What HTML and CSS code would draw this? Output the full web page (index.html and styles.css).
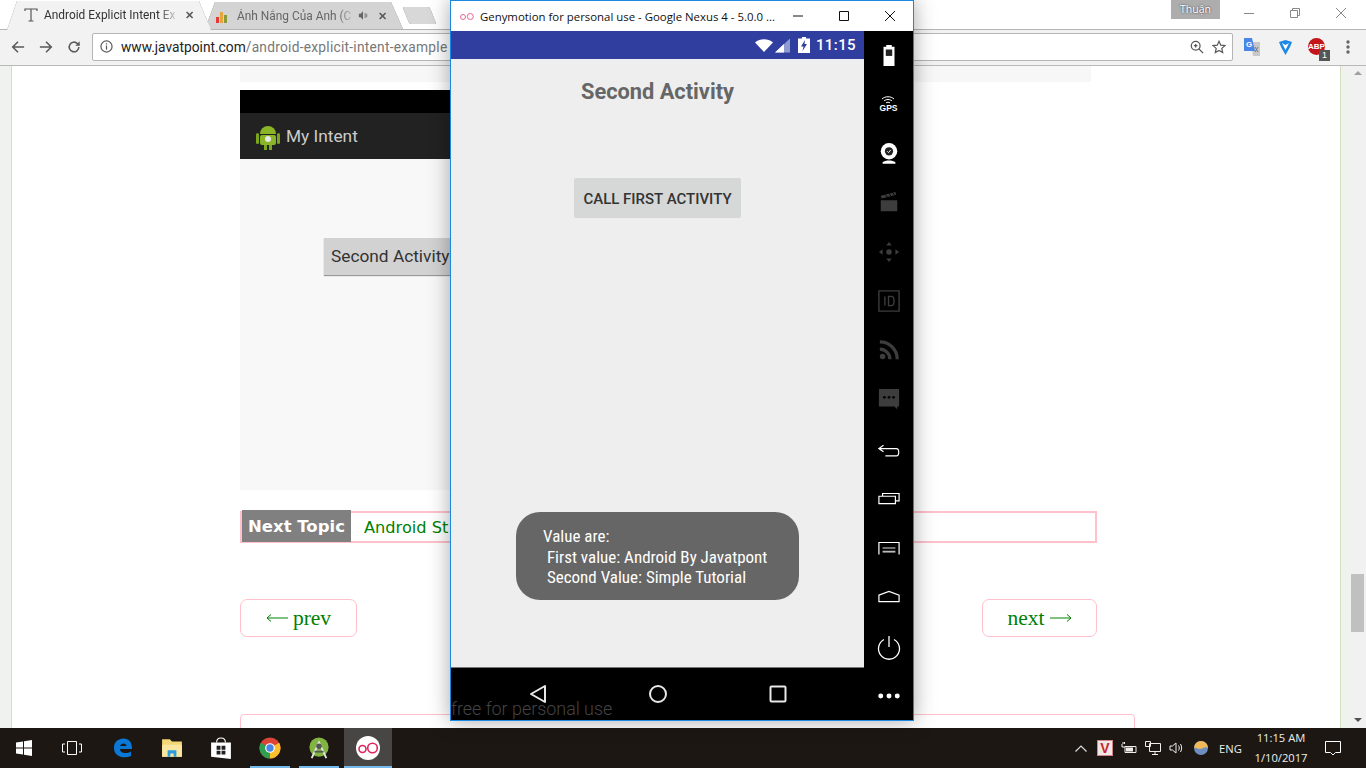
FILE: index.html
```html
<!DOCTYPE html>
<html lang="en">

<head>
    <meta charset="UTF-8">
    <meta name="viewport" content="width=device-width, initial-scale=1.0">
    <title>Android Explicit Intent Example</title>
    <link rel="stylesheet" href="styles.css">
</head>

<body>
    <!-- Chrome window -->
    <div class="browser">
        <div class="tabstrip">
            <div class="tabs">
                <div class="tab tab-active">
                    <svg class="tab-icon" viewBox="0 0 16 16" fill="none" stroke="#555" stroke-width="1.2">
                        <path d="M2 4V2h12v2M8 2v12M5.5 14h5"></path>
                    </svg>
                    <span class="tab-title">Android Explicit Intent Ex</span>
                    <span class="tab-close">✕</span>
                </div>
                <div class="tab tab-back">
                    <svg class="tab-icon" viewBox="0 0 16 16">
                        <rect x="1" y="9" width="3" height="6" fill="#e53935"></rect>
                        <rect x="5" y="4" width="3" height="11" fill="#e8a33d"></rect>
                        <rect x="9" y="7" width="3" height="8" fill="#8a9a3a"></rect>
                    </svg>
                    <span class="tab-title">Ánh Nắng Của Anh (C</span>
                    <svg class="tab-sound" viewBox="0 0 12 12" fill="#666">
                        <path d="M1 4h2l3-3v10L3 8H1zM8 3h1v6H8zM10 4h1v4h-1z"></path>
                    </svg>
                    <span class="tab-close">✕</span>
                </div>
                <div class="tab-new"></div>
            </div>
            <div class="tab-spacer"></div>
            <div class="profile">Thuận</div>
            <div class="win-buttons">
                <svg viewBox="0 0 46 30" stroke="#888" fill="none"><path d="M18 13.5h10"></path></svg>
                <svg viewBox="0 0 46 30" stroke="#888" fill="none"><path d="M18.5 10.5h7v7h-7zM20.5 10.5v-2h7v7h-2"></path></svg>
                <svg viewBox="0 0 46 30" stroke="#888" fill="none"><path d="M18 8l10 10M28 8L18 18"></path></svg>
            </div>
        </div>

        <div class="toolbar">
            <svg class="nav-icon" viewBox="0 0 16 16" fill="none" stroke="#5a5a5a" stroke-width="1.8"><path d="M15 8H2M8 2L2 8l6 6"></path></svg>
            <svg class="nav-icon" viewBox="0 0 16 16" fill="none" stroke="#5a5a5a" stroke-width="1.8"><path d="M1 8h13M8 2l6 6-6 6"></path></svg>
            <svg class="nav-icon" viewBox="0 0 16 16" fill="none" stroke="#5a5a5a" stroke-width="1.8"><path d="M13.5 8a5.5 5.5 0 1 1-1.6-3.9L14 6"></path><path d="M14.5 1.5v5h-5z" fill="#5a5a5a" stroke="none"></path></svg>
            <div class="omnibox">
                <svg class="omni-info" viewBox="0 0 14 14" fill="none" stroke="#5a5a5a" stroke-width="1.3">
                    <circle cx="7" cy="7" r="6"></circle><path d="M7 6v4.5M7 3.5v1.3"></path>
                </svg>
                <span class="url">www.javatpoint.com<span class="url-path">/android-explicit-intent-example</span></span>
                <div class="omni-spacer"></div>
                <svg class="omni-tool" viewBox="0 0 16 16" fill="none" stroke="#5a5a5a" stroke-width="1.5">
                    <circle cx="6.5" cy="6.5" r="5"></circle><path d="M10 10l5 5M4.500 6.500h4M6.500 4.500v4"></path>
                </svg>
                <svg class="omni-tool" viewBox="0 0 16 16" fill="none" stroke="#5a5a5a" stroke-width="1.4">
                    <path d="M8 1.500l2 4.400 4.800.5-3.600 3.200 1 4.700L8 11.900l-4.200 2.400 1-4.700L1.200 6.400 6 5.900z"></path>
                </svg>
            </div>
            <div class="extensions">
                <svg class="ext-translate" viewBox="0 0 16 18">
                    <path d="M7 4h9v14H9z" fill="#c8c8c8"></path>
                    <path d="M11 9l3 5M14 9l-3 5" stroke="#777" fill="none"></path>
                    <path d="M0 0h8l3 13H0z" fill="#4a86e8"></path>
                    <text x="2" y="9" class="ext-letter">G</text>
                </svg>
                <svg class="ext-filter" viewBox="0 0 15 16">
                    <path d="M1 3l6.500-2L14 3l-2 5-4.500 8L3 8z" fill="#1e88e5"></path>
                    <path d="M4 4l3.500 7L11 4 7.500 6z" fill="#fff"></path>
                </svg>
                <div class="abp">
                    <span class="abp-badge">ABP</span>
                    <span class="abp-count">1</span>
                </div>
                <svg class="menu-dots" viewBox="0 0 4 14" fill="#666">
                    <circle cx="2" cy="2" r="1.700"></circle><circle cx="2" cy="7" r="1.700"></circle><circle cx="2" cy="12" r="1.700"></circle>
                </svg>
            </div>
        </div>

        <div class="viewport">
            <div class="page">
                <div class="page-column">
                    <div class="code-end"></div>
                    <div class="shot">
                        <div class="shot-status"></div>
                        <div class="shot-bar">
                            <svg class="shot-logo" viewBox="0 0 24 28">
                                <path d="M4 12a8 8 0 0 1 16 0z" fill="#8ab526"></path>
                                <rect x="4" y="13" width="16" height="10" rx="2" fill="#8ab526"></rect>
                                <rect x="0" y="11" width="3" height="11" rx="1.500" fill="#7aa51f"></rect>
                                <rect x="21" y="11" width="3" height="11" rx="1.500" fill="#7aa51f"></rect>
                                <rect x="8" y="23" width="3" height="5" fill="#7aa51f"></rect>
                                <rect x="13" y="23" width="3" height="5" fill="#7aa51f"></rect>
                                <circle cx="12" cy="17" r="3" fill="#e8e8e8"></circle>
                            </svg>
                            <span>My Intent</span>
                        </div>
                        <div class="shot-body">
                            <div class="shot-button">Second Activity</div>
                        </div>
                    </div>
                    <div class="next-topic">
                        <span class="next-label">Next Topic</span>
                        <span class="next-link">Android St</span>
                    </div>
                    <div class="pager">
                        <a class="pager-link pager-prev">
                            <svg class="pager-arrow" viewBox="0 0 22 10" fill="none" stroke="#008000"><path d="M22 5H1M5 1.500L1 5l4 3.500"></path></svg>
                            <span>prev</span>
                        </a>
                        <a class="pager-link">
                            <span>next</span>
                            <svg class="pager-arrow" viewBox="0 0 22 10" fill="none" stroke="#008000"><path d="M0 5h21M17 1.500L21 5l-4 3.500"></path></svg>
                        </a>
                    </div>
                    <div class="bottom-box"></div>
                </div>
            </div>
            <div class="scrollbar">
                <div class="scroll-up"></div>
                <div class="scroll-thumb"></div>
                <div class="scroll-down"></div>
            </div>
        </div>
    </div>

    <!-- Taskbar -->
    <div class="taskbar">
        <div class="task-item task-start">
            <svg viewBox="0 0 16 16" class="task-svg" fill="#fff"><path d="M0 2.500l7-1v6.100H0zM8 1.300l8-1.300v7.600H8zM0 8.400h7v6.100l-7-1zM8 8.400h8V16l-8-1.300z"></path></svg>
        </div>
        <div class="task-item task-view">
            <svg viewBox="0 0 20 14" class="task-svg-wide" fill="none" stroke="#fff" stroke-width="1"><path d="M5.500.5h9v13h-9zM3 3H.5v8H3M17 3h2.500v8H17"></path></svg>
        </div>
        <div class="task-item">
            <svg viewBox="0 0 20 20" class="task-edge" fill="none"><path d="M1 10C1 4 5 .5 10.500 .5c5.500 0 8.500 3.500 8.500 10.500H7c0 4 6 5.500 11 2.500v4.500c-7 3-17 1-17-8zM7 8h6.500c0-3.500-5.500-3.500-6.500 0z" fill="#0a78d7" fill-rule="evenodd"></path></svg>
        </div>
        <div class="task-item">
            <svg viewBox="0 0 20 20" class="task-app"><path d="M1 2h7l2 2h9v14H1z" fill="#f4d774"></path><path d="M1 7h18v11H1z" fill="#fbe6a0"></path><path d="M6 18v-6h8v6h-2.500v-3h-3v3z" fill="#2a9de0"></path></svg>
        </div>
        <div class="task-item">
            <svg viewBox="0 0 20 20" class="task-app"><path d="M1 5h18v15L1 18z" fill="#fff"></path><path d="M6 5c0-5.500 8-5.500 8 0" fill="none" stroke="#fff"></path><path d="M6 8h3.500v3.500H6zM10.500 8H14v3.500h-3.500zM6 12.500h3.500V16H6zM10.500 12.500H14V16h-3.500z" fill="#222"></path></svg>
        </div>
        <div class="task-item task-open">
            <svg viewBox="0 0 24 24" class="task-app">
                <circle cx="12" cy="12" r="11.500" fill="#db4437"></circle>
                <path d="M12 12L22 6.300A11.500 11.500 0 0 1 12 23.500z" fill="#fbc02d"></path>
                <path d="M12 12L12 23.500A11.500 11.500 0 0 1 2 6.300z" fill="#2e9e4f"></path>
                <circle cx="12" cy="12" r="5.300" fill="#fff"></circle>
                <circle cx="12" cy="12" r="4" fill="#4a86e8"></circle>
            </svg>
        </div>
        <div class="task-item task-open">
            <svg viewBox="0 0 24 24" class="task-app">
                <circle cx="12" cy="11" r="10.500" fill="#82b440"></circle>
                <path d="M4 23L12 6l8 17" fill="none" stroke="#e8e8e8" stroke-width="2"></path>
                <circle cx="12" cy="10" r="3" fill="#555"></circle>
                <path d="M7 16h10" stroke="#555" stroke-width="2"></path>
            </svg>
        </div>
        <div class="task-item task-open task-active">
            <svg viewBox="0 0 24 24" class="task-app-lg">
                <circle cx="12" cy="12" r="12" fill="#fff"></circle>
                <circle cx="6.500" cy="13" r="3.500" fill="none" stroke="#e0245e" stroke-width="1.600"></circle>
                <circle cx="16.500" cy="12" r="4.800" fill="none" stroke="#e0245e" stroke-width="1.600"></circle>
            </svg>
        </div>
        <div class="task-spacer"></div>
        <div class="tray">
            <svg class="tray-chevron" viewBox="0 0 12 7" fill="none" stroke="#ddd" stroke-width="1.200"><path d="M.5 6.500L6 1l5.500 5.500"></path></svg>
            <div class="tray-v">V</div>
            <svg class="tray-icon" viewBox="0 0 16 14" fill="none" stroke="#eee"><path d="M4 5.500h11v6H4zM1 3v3h3M2 1v2M3.500 1v2"></path><path d="M5 6.500h7v4H5z" fill="#eee" stroke="none"></path></svg>
            <svg class="tray-icon" viewBox="0 0 16 14" fill="none" stroke="#eee"><path d="M4.500 2.500h11v8h-11zM.5.500h5v5h-5zM10 10.500v3M7 13.500h6"></path></svg>
            <svg class="tray-icon" viewBox="0 0 16 14" fill="none" stroke="#eee"><path d="M1 5h2.500L7 2v10L3.500 9H1zM9.500 4.500c1 1.500 1 3.500 0 5M11.500 3c1.500 2.500 1.500 5.500 0 8"></path></svg>
            <svg class="tray-weather" viewBox="0 0 14 14">
                <circle cx="7" cy="7" r="7" fill="#6e8ebf"></circle>
                <path d="M0 7a7 7 0 0 1 14 0C11 5 9 8 6 8 4 8 2 6 0 7z" fill="#f0b95a"></path>
            </svg>
            <span class="tray-lang">ENG</span>
            <div class="tray-clock">
                <span>11:15 AM</span>
                <span>1/10/2017</span>
            </div>
            <svg class="tray-notify" viewBox="0 0 16 15" fill="none" stroke="#fff"><path d="M.5.500h15v11h-5l-2.500 2.500-2.500-2.500h-5z"></path></svg>
        </div>
    </div>

    <!-- Genymotion window, floating over the browser -->
    <div class="geny">
        <div class="geny-title">
            <svg class="geny-logo" viewBox="0 0 14 9" fill="none" stroke="#e8668c" stroke-width="1">
                <circle cx="3" cy="5" r="2.500"></circle><circle cx="10.300" cy="4.500" r="3"></circle>
            </svg>
            <span class="geny-name">Genymotion for personal use - Google Nexus 4 - 5.0.0 ...</span>
            <div class="geny-controls">
                <svg viewBox="0 0 46 30" stroke="#111" fill="none"><path d="M18 15h10"></path></svg>
                <svg viewBox="0 0 46 30" stroke="#111" fill="none"><path d="M18.500 10.500h9v9h-9z"></path></svg>
                <svg viewBox="0 0 46 30" stroke="#111" fill="none"><path d="M18 10l10 10M28 10L18 20"></path></svg>
            </div>
        </div>
        <div class="geny-main">
            <div class="phone">
                <div class="phone-status">
                    <svg class="status-wifi" viewBox="0 0 18 13" fill="#fff"><path d="M0 3.500C5-.9 13-.9 18 3.500L9 13z"></path></svg>
                    <svg class="status-signal" viewBox="0 0 16 15"><path d="M0 15L16 0v15z" fill="#8f9bd0"></path><path d="M0 15L9.500 6v9z" fill="#fff"></path></svg>
                    <svg class="status-battery" viewBox="0 0 12 16"><path d="M4 0h4v1.500h4V16H0V1.500h4z" fill="#fff"></path><path d="M7 3L3 9.500h2.500L4.500 14 9 7H6.500z" fill="#303f9f"></path></svg>
                    <span class="status-time">11:15</span>
                </div>
                <div class="phone-screen">
                    <h1 class="activity-title">Second Activity</h1>
                    <div class="activity-button">CALL FIRST ACTIVITY</div>
                    <div class="toast">
                        <span>Value are:</span>
                        <span>&nbsp;First value: Android By Javatpont</span>
                        <span>&nbsp;Second Value: Simple Tutorial</span>
                    </div>
                </div>
                <div class="phone-nav">
                    <svg viewBox="0 0 20 20" fill="none" stroke="#e8e8e8" stroke-width="2"><path d="M17 2v16L3 10z" stroke-linejoin="round"></path></svg>
                    <svg viewBox="0 0 20 20" fill="none" stroke="#e8e8e8" stroke-width="2"><circle cx="10" cy="10" r="8"></circle></svg>
                    <svg viewBox="0 0 20 20" fill="none" stroke="#e8e8e8" stroke-width="2"><rect x="2.500" y="2.500" width="15" height="15" rx="1"></rect></svg>
                </div>
                <div class="free-note">free for personal use</div>
            </div>
            <div class="geny-side">
                <svg class="side-icon" viewBox="0 0 24 24"><path d="M9 1h6v2h3v21H6V3h3z" fill="#fff"></path><rect x="8.500" y="6" width="7" height="7" fill="#222"></rect></svg>
                <div class="side-gps">
                    <svg viewBox="0 0 14 8" fill="none" stroke="#fff" stroke-width="1"><path d="M1 3c3-3 9-3 12 0M3 5c2-2 6-2 8 0M5 7c1-1 3-1 4 0"></path></svg>
                    <span>GPS</span>
                </div>
                <svg class="side-icon" viewBox="0 0 24 24"><circle cx="12" cy="9" r="9" fill="#fff"></circle><circle cx="12" cy="9" r="4.500" fill="#222"></circle><path d="M10 9l1.500 1.500L14 7.500" stroke="#fff" fill="none"></path><path d="M5 21c3-2.500 11-2.500 14 0v1.500H5z" fill="#fff"></path></svg>
                <svg class="side-icon" viewBox="0 0 24 24" fill="#3d3d3d"><path d="M3 9h18v12H3zM3 4L19 0l1 3-16 4z"></path><path d="M8 2.500l2 3M12 1.500l2 3M16 .5l2 3" stroke="#000"></path></svg>
                <svg class="side-icon" viewBox="0 0 24 24" fill="#3d3d3d"><circle cx="12" cy="12" r="3"></circle><path d="M12 1l3 4H9zM12 23l-3-4h6zM1 12l4-3v6zM23 12l-4 3V9z"></path></svg>
                <svg class="side-icon" viewBox="0 0 24 24" fill="none" stroke="#3d3d3d" stroke-width="1.500"><path d="M1 1h22v22H1z"></path><path d="M7.500 7v10M11.500 7v10h3c4 0 4-10 0-10z"></path></svg>
                <svg class="side-icon" viewBox="0 0 24 24" fill="none" stroke="#3d3d3d" stroke-width="3.500"><path d="M2 2c10 0 19 8 19 19M2 10c6 0 11 5 11 11"></path><circle cx="5" cy="18" r="3" fill="#3d3d3d" stroke="none"></circle></svg>
                <svg class="side-icon" viewBox="0 0 24 24"><path d="M1 0h22v19h-2v3l-3-3H1z" fill="#3d3d3d"></path><circle cx="7" cy="9" r="1.500"></circle><circle cx="12" cy="9" r="1.500"></circle><circle cx="17" cy="9" r="1.500"></circle></svg>
                <svg class="side-icon" viewBox="0 0 24 24" fill="none" stroke="#fff" stroke-width="1.300"><path d="M6 8l-5 3.500L6 15M1 11.500h19c3.500 0 3.500 8 0 8H8"></path></svg>
                <svg class="side-icon" viewBox="0 0 24 24" fill="none" stroke="#fff" stroke-width="1.300"><path d="M1 9h18v8H1zM5 9V6h18v8h-4"></path></svg>
                <svg class="side-icon" viewBox="0 0 24 24" fill="none" stroke="#fff" stroke-width="1.300"><path d="M1 19V6h22v13"></path><path d="M5 12h14" stroke="#bbb"></path><path d="M5 16h14" stroke="#bbb" stroke-width="2"></path></svg>
                <svg class="side-icon" viewBox="0 0 24 24" fill="none" stroke="#fff" stroke-width="1.300"><path d="M1 10l11-4 11 4v7H1z"></path></svg>
                <svg class="side-power" viewBox="0 0 24 24" fill="none" stroke="#fff" stroke-width="1.300"><path d="M7 3.500a10.500 10.500 0 1 0 10 0M12 0v11"></path></svg>
                <svg class="side-more" viewBox="0 0 24 6" fill="#fff"><circle cx="3" cy="3" r="2.700"></circle><circle cx="12" cy="3" r="2.700"></circle><circle cx="21" cy="3" r="2.700"></circle></svg>
            </div>
        </div>
    </div>
</body>

</html>
```

FILE: styles.css
```css
* {
    box-sizing: border-box;
}

html,
body {
    height: 100%;
}

body {
    margin: 0;
    padding: 0;
    overflow: hidden;
    position: relative;
    font-family: "Open Sans", "Noto Sans", sans-serif;
    display: flex;
    flex-direction: column;
}

svg {
    display: block;
    flex: none;
}
/* Browser window */

.browser {
    height: 728px;
    display: flex;
    flex-direction: column;
    background: #fff;
}
/* Tabs */

.tabstrip {
    height: 29px;
    display: flex;
    align-items: flex-end;
    padding-left: 7px;
    background: #fff;
    flex: none;
    position: relative;
    z-index: 1;
}

.tabs {
    display: flex;
    align-items: flex-end;
    filter: drop-shadow(0 0 0.6px #777);
}

.tab {
    display: flex;
    align-items: center;
    font-size: 12px;
    white-space: nowrap;
    position: relative;
    clip-path: polygon(0 100%, 10px 0, calc(100% - 12px) 0, 100% 100%);
}

.tab-active {
    width: 204px;
    height: 29px;
    margin-bottom: -1px;
    padding: 0 17px 2px 16px;
    background: #f2f2f2;
    color: #333;
    z-index: 1;
}

.tab-back {
    width: 198px;
    height: 27px;
    margin-left: -6px;
    padding: 0 16px 0 10px;
    background: #d4d4d4;
    color: #666;
}

.tab-icon {
    width: 16px;
    height: 16px;
    margin-right: 5px;
}

.tab-back .tab-icon {
    margin-right: 6px;
}

.tab-title {
    flex: 1;
    min-width: 0;
    overflow: hidden;
    font-family: "Roboto", sans-serif;
    font-size: 11.9px;
    -webkit-mask-image: linear-gradient(to right, #000 85%, transparent);
    mask-image: linear-gradient(to right, #000 85%, transparent);
}

.tab-sound {
    width: 10px;
    height: 11px;
    margin: 0 4px 0 2px;
}

.tab-close {
    font-size: 11px;
    font-weight: bold;
    color: #5c5c5c;
    margin-left: 6px;
}

.tab-new {
    width: 27px;
    height: 17px;
    margin: 0 0 5px 3px;
    background: #d8d8d8;
    transform: skewX(22deg);
    border-radius: 2px;
    flex: none;
}

.tab-spacer {
    flex: 1;
}

.profile {
    align-self: flex-start;
    width: 49px;
    height: 19px;
    background: #adadad;
    color: #fff;
    font-size: 10.5px;
    line-height: 18px;
    text-align: center;
    text-shadow: 0 0 2px #222;
}

.win-buttons {
    align-self: flex-start;
    display: flex;
    width: 146px;
    padding-left: 6px;
}

.win-buttons svg {
    width: 46px;
    height: 30px;
}
/* Toolbar */

.toolbar {
    height: 37px;
    flex: none;
    display: flex;
    align-items: center;
    padding: 0 0 2px 11px;
    background: #f2f2f2;
    border-top: 1px solid #b4b4b4;
    border-bottom: 1px solid #b9b9b9;
}

.nav-icon {
    width: 14px;
    height: 14px;
    margin-right: 14px;
}

.omnibox {
    width: 1141px;
    height: 28px;
    margin-left: -3px;
    flex: none;
    display: flex;
    align-items: center;
    padding: 0 6px 0 7px;
    background: #fff;
    border: 1px solid #b5b5b5;
    border-radius: 2px;
}

.omni-info {
    width: 13px;
    height: 13px;
    margin-right: 8px;
}

.url {
    font-family: "Roboto", sans-serif;
    font-size: 13.75px;
    color: #222;
    white-space: nowrap;
}

.url-path {
    color: #777;
    letter-spacing: 0.25px;
}

.omni-spacer {
    flex: 1;
}

.omni-tool {
    width: 14px;
    height: 14px;
    margin-left: 8px;
}

.extensions {
    display: flex;
    align-items: center;
    padding-left: 11px;
}

.ext-translate {
    width: 16px;
    height: 18px;
}

.ext-filter {
    width: 15px;
    height: 16px;
    margin-left: 18px;
}

.ext-letter {
    font-family: "Liberation Sans", sans-serif;
    font-size: 8px;
    font-weight: bold;
    fill: #fff;
}

.abp {
    position: relative;
    width: 17px;
    height: 17px;
    margin-left: 15px;
    border-radius: 50%;
    background: #c4151b;
}

.abp-badge {
    display: block;
    font-family: "Liberation Sans", sans-serif;
    font-size: 8px;
    font-weight: bold;
    line-height: 17px;
    text-align: center;
    color: #fff;
}

.abp-count {
    position: absolute;
    right: -5px;
    bottom: -6px;
    width: 11px;
    height: 11px;
    background: #555;
    color: #fff;
    font-family: "Liberation Sans", sans-serif;
    font-size: 9px;
    line-height: 11px;
    text-align: center;
}

.menu-dots {
    width: 4px;
    height: 14px;
    margin-left: 21px;
}
/* Page */

.viewport {
    flex: 1;
    display: flex;
    min-height: 0;
    background: #f0f2f0;
}

.page {
    flex: 1;
    margin: 0 8px 0 11px;
    padding-left: 228px;
    background: #fff;
    border-left: 1px solid #d5dfc0;
    border-right: 1px solid #d5dfc0;
    overflow: hidden;
}

.page-column {
    width: 895px;
    height: 100%;
    display: flex;
    flex-direction: column;
    align-items: flex-start;
}

.code-end {
    width: 851px;
    height: 16px;
    background: #f7f7f7;
    flex: none;
}

.shot {
    width: 400px;
    height: 400px;
    margin-top: 8px;
    flex: none;
    display: flex;
    flex-direction: column;
}

.shot-status {
    height: 23px;
    background: #000;
}

.shot-bar {
    height: 46px;
    display: flex;
    align-items: center;
    padding-left: 16px;
    background: #222;
    color: #ccc;
    font-family: "Roboto", sans-serif;
    font-size: 17.3px;
}

.shot-logo {
    width: 24px;
    height: 28px;
    margin-right: 6px;
}

.shot-body {
    flex: 1;
    padding: 79px 0 0 84px;
    background: #f8f8f8;
}

.shot-button {
    width: 160px;
    height: 37px;
    padding-left: 7px;
    background: #d2d2d2;
    color: #333;
    font-family: "Roboto", sans-serif;
    font-size: 17.3px;
    line-height: 37px;
    white-space: nowrap;
    box-shadow: 0 1px 1px #999;
}

.next-topic {
    width: 857px;
    height: 32px;
    margin-top: 21px;
    flex: none;
    display: flex;
    align-items: center;
    border: 2px solid #ffc0cb;
}

.next-label {
    width: 109px;
    height: 32px;
    margin-top: -3px;
    align-self: flex-start;
    background: #808080;
    color: #fff;
    font-family: "DejaVu Sans", sans-serif;
    font-size: 16.5px;
    font-weight: bold;
    line-height: 34px;
    text-align: center;
    white-space: nowrap;
}

.next-link {
    margin-left: 13px;
    color: #008000;
    font-family: "DejaVu Sans", sans-serif;
    font-size: 16.2px;
}

.pager {
    width: 857px;
    margin-top: 56px;
    flex: none;
    display: flex;
    justify-content: space-between;
}

.pager-link {
    width: 115px;
    height: 38px;
    display: flex;
    align-items: center;
    justify-content: center;
    gap: 5px;
    border: 1px solid #ffc0cb;
    border-radius: 7px;
    color: #008000;
    font-family: "Liberation Serif", serif;
    font-size: 21.5px;
}

.pager-prev {
    width: 117px;
}

.pager-arrow {
    width: 22px;
    height: 10px;
}

.bottom-box {
    width: 895px;
    height: 40px;
    margin-top: 77px;
    flex: none;
    border: 1px solid #ffc0cb;
    border-radius: 4px;
}
/* Scrollbar */

.scrollbar {
    width: 17px;
    flex: none;
    padding-top: 5px;
    display: flex;
    flex-direction: column;
    align-items: center;
    background: #f1f1f1;
}

.scroll-up {
    height: 4px;
    border-left: 4px solid transparent;
    border-right: 4px solid transparent;
    border-bottom: 4px solid #a0a0a0;
}

.scroll-thumb {
    width: 13px;
    height: 58px;
    margin-top: 499px;
    background: #c0c0c0;
}

.scroll-down {
    height: 4px;
    margin-top: auto;
    margin-bottom: 6px;
    border-left: 4px solid transparent;
    border-right: 4px solid transparent;
    border-top: 4px solid #505050;
}
/* Taskbar */

.taskbar {
    height: 40px;
    flex: none;
    display: flex;
    align-items: stretch;
    background: #1c1712;
    color: #eee;
}

.task-item {
    width: 48px;
    display: flex;
    align-items: center;
    justify-content: center;
    margin-right: 1px;
    position: relative;
}

.task-view {
    width: 49px;
    padding-right: 3px;
}

.task-open::after {
    content: "";
    position: absolute;
    left: 4px;
    right: 4px;
    bottom: 0;
    height: 2px;
    background: #76b9ed;
}

.task-active {
    background: #484644;
    margin-right: 0;
}

.task-active::after {
    left: 0;
    right: 0;
}

.task-svg {
    width: 16px;
    height: 16px;
}

.task-svg-wide {
    width: 20px;
    height: 14px;
}

.task-edge {
    width: 20px;
    height: 20px;
}

.task-app {
    width: 22px;
    height: 22px;
}

.task-app-lg {
    width: 24px;
    height: 24px;
}

.task-spacer {
    flex: 1;
}

.tray {
    display: flex;
    align-items: center;
    font-family: "Open Sans", sans-serif;
    font-size: 11.2px;
}

.tray-chevron {
    width: 12px;
    height: 7px;
    margin-right: 10px;
}

.tray-v {
    width: 16px;
    height: 16px;
    margin-right: 8px;
    background: #f3e6e6;
    border: 1px solid #c88;
    color: #c62828;
    font-family: "Liberation Sans", sans-serif;
    font-size: 14px;
    font-weight: bold;
    line-height: 14px;
    text-align: center;
}

.tray-icon {
    width: 16px;
    height: 14px;
    margin-right: 8px;
}

.tray-weather {
    width: 14px;
    height: 14px;
    margin: 0 11px 0 1px;
}

.tray-lang {
    width: 24px;
    margin-right: 0;
}

.tray-clock {
    width: 76px;
    display: flex;
    flex-direction: column;
    align-items: center;
    line-height: 20px;
    margin-right: 6px;
}

.tray-notify {
    width: 16px;
    height: 15px;
    margin-right: 25px;
}
/* Genymotion window */

.geny {
    position: absolute;
    left: 450px;
    top: 0;
    width: 464px;
    height: 721px;
    z-index: 2;
    display: flex;
    flex-direction: column;
    border: 1px solid #1a88e0;
    background: #000;
    box-shadow: 0 0 20px rgba(0, 0, 0, 0.35);
}

.geny-title {
    height: 30px;
    flex: none;
    display: flex;
    align-items: center;
    padding-left: 9px;
    background: #fff;
}

.geny-logo {
    width: 14px;
    height: 9px;
    margin-right: 6px;
}

.geny-name {
    flex: 1;
    font-family: "Open Sans", sans-serif;
    font-size: 11.4px;
    color: #111;
    white-space: nowrap;
}

.geny-controls {
    display: flex;
    margin-right: 4px;
}

.geny-controls svg {
    width: 46px;
    height: 30px;
}

.geny-main {
    flex: 1;
    display: flex;
    min-height: 0;
}

.phone {
    width: 413px;
    display: flex;
    flex-direction: column;
    position: relative;
}

.phone-status {
    height: 28px;
    flex: none;
    display: flex;
    align-items: center;
    justify-content: flex-end;
    padding-right: 8px;
    background: #303f9f;
    color: #fff;
}

.status-wifi {
    width: 18px;
    height: 13px;
    margin-right: 2px;
}

.status-signal {
    width: 15px;
    height: 15px;
    margin-right: 8px;
}

.status-battery {
    width: 12px;
    height: 16px;
    margin-right: 6px;
}

.status-time {
    font-family: "Roboto", sans-serif;
    font-size: 15px;
    font-weight: 500;
    letter-spacing: 0.4px;
}

.phone-screen {
    flex: 1;
    display: flex;
    flex-direction: column;
    align-items: center;
    position: relative;
    background: #eeeeee;
    border-bottom: 1px solid #777;
}

.activity-title {
    margin: 19px 0 0;
    font-family: "Roboto", sans-serif;
    font-size: 21.8px;
    font-weight: 700;
    line-height: 28px;
    color: #666;
}

.activity-button {
    width: 167px;
    height: 40px;
    margin-top: 72px;
    border-radius: 2px;
    background: #d6d7d7;
    color: #333;
    font-family: "Roboto", sans-serif;
    font-size: 15px;
    font-weight: 500;
    line-height: 42px;
    text-align: center;
    white-space: nowrap;
}

.toast {
    position: absolute;
    left: 65px;
    top: 453px;
    width: 283px;
    height: 88px;
    padding: 14px 0 0 27px;
    display: flex;
    flex-direction: column;
    border-radius: 24px;
    background: #666;
    color: #fff;
    font-family: "Roboto", sans-serif;
    font-stretch: condensed;
    font-size: 17px;
    line-height: 20.5px;
    white-space: pre;
}

.phone-nav {
    height: 52px;
    flex: none;
    display: flex;
    align-items: center;
    padding-left: 77px;
    gap: 100px;
    background: #000;
}

.phone-nav svg {
    width: 20px;
    height: 20px;
}

.free-note {
    position: absolute;
    left: 0;
    bottom: 0;
    color: #444;
    font-family: "Roboto", sans-serif;
    font-weight: 300;
    font-size: 17.9px;
    line-height: 22px;
    white-space: nowrap;
}

.geny-side {
    flex: 1;
    display: flex;
    flex-direction: column;
    align-items: center;
    padding-top: 13px;
    background: #000;
}

.side-icon {
    width: 22px;
    height: 22px;
    margin-bottom: 27.3px;
}

.side-gps {
    height: 22px;
    margin-bottom: 27.3px;
    color: #fff;
    font-family: "Liberation Sans", sans-serif;
    font-size: 8.5px;
    font-weight: bold;
    line-height: 9px;
    text-align: center;
}

.side-gps svg {
    width: 14px;
    height: 8px;
    margin: 3px auto 0;
}

.side-power {
    width: 24px;
    height: 24px;
    margin-bottom: 33px;
}

.side-more {
    width: 22px;
    height: 6px;
}
```
